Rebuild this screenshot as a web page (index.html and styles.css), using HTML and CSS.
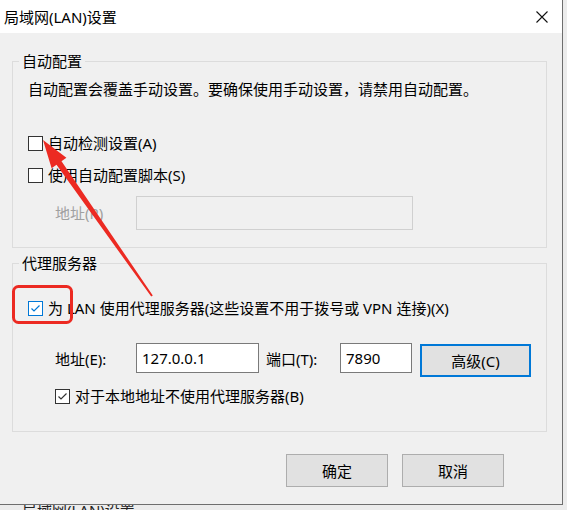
FILE: index.html
```html
<!DOCTYPE html>
<html lang="zh-CN">
<head>
    <meta charset="UTF-8">
    <title>局域网(LAN)设置</title>
    <link rel="stylesheet" href="styles.css">
</head>
<body>

    <div class="window">
        <div class="titlebar">
            <span class="title">局域网(LAN)设置</span>
            <svg class="close" width="12" height="12" viewBox="0 0 12 12">
                <path d="M0.5 0.5 L11.5 11.5 M11.5 0.5 L0.5 11.5" stroke="#111" stroke-width="1.1" fill="none"/>
            </svg>
        </div>

        <div class="content">
            <fieldset class="group group-auto">
                <legend>自动配置</legend>
                <div class="desc">自动配置会覆盖手动设置。要确保使用手动设置，请禁用自动配置。</div>

                <div class="check-row first">
                    <span class="box"></span>
                    <span>自动检测设置(A)</span>
                </div>
                <div class="check-row second">
                    <span class="box"></span>
                    <span>使用自动配置脚本(S)</span>
                </div>
                <div class="field-row script-row">
                    <span class="field-label disabled">地址(R)</span>
                    <span class="input input-disabled"></span>
                </div>
            </fieldset>

            <fieldset class="group group-proxy">
                <legend>代理服务器</legend>
                <div class="check-row proxy-check">
                    <span class="box box-blue">
                        <svg width="13" height="13" viewBox="0 0 13 13"><path d="M2.5 6.5 L5 9 L10.5 3.5" stroke="#0078d7" stroke-width="1.2" fill="none"/></svg>
                    </span>
                    <span>为 LAN 使用代理服务器(这些设置不用于拨号或 VPN 连接)(X)</span>
                </div>
                <div class="field-row proxy-row">
                    <span class="field-label">地址(E):</span>
                    <span class="input input-addr">127.0.0.1</span>
                    <span class="field-label port-label">端口(T):</span>
                    <span class="input input-port">7890</span>
                    <span class="btn btn-focus">高级(C)</span>
                </div>
                <div class="check-row bypass">
                    <span class="box">
                        <svg width="13" height="13" viewBox="0 0 13 13"><path d="M2.5 6.5 L5 9 L10.5 3.5" stroke="#333" stroke-width="1.2" fill="none"/></svg>
                    </span>
                    <span>对于本地地址不使用代理服务器(B)</span>
                </div>
            </fieldset>

            <div class="actions">
                <span class="btn">确定</span>
                <span class="btn">取消</span>
            </div>
        </div>
    </div>

    <div class="behind"><span>局域网(LAN)设置</span></div>

    <!-- red marks drawn on top of the screenshot -->
    <svg class="marks" width="567" height="510" viewBox="0 0 567 510">
        <rect x="13.5" y="286.5" width="58" height="36" rx="5" fill="none" stroke="#ec2a22" stroke-width="3"/>
        <polygon points="43,140 66.4,157.8 61.5,161.3 152.8,295.4 151.2,296.6 56.5,164.7 51.6,168.2" fill="#ec2a22"/>
    </svg>

</body>
</html>
```

FILE: styles.css
```css
body {
    margin: 0;
    width: 567px;
    height: 510px;
    overflow: hidden;
    background: #ececec;
    font-family: "Noto Sans", "Noto Sans CJK SC", sans-serif;
    font-size: 15px;
    color: #000;
    position: relative;
}
.window {
    width: 562px;
    height: 504px;
    border-right: 1px solid #6e6e6e;
    border-bottom: 1px solid #6e6e6e;
    background: #f0f0f0;
    display: flex;
    flex-direction: column;
}
.titlebar {
    height: 33px;
    background: #fff;
    display: flex;
    align-items: center;
    justify-content: space-between;
    padding: 0 14px 0 4px;
}
.title {
    line-height: 20px;
}
.content {
    display: flex;
    flex-direction: column;
}
.group {
    margin: 0 15px 0 12px;
    padding: 0 0 0 0;
    border: 1px solid #dcdcdc;
    min-width: 0;
}
.group legend {
    margin-left: 6px;
    padding: 0 3px;
    line-height: 20px;
}
.group-auto {
    margin-top: 18px;
    padding-bottom: 17px;
}
.group-proxy {
    margin-top: 5px;
    padding-bottom: 25px;
}
.desc {
    margin-top: 8px;
    padding-left: 15px;
    line-height: 20px;
}
.check-row {
    display: flex;
    align-items: center;
    gap: 5px;
    padding-left: 15px;
    line-height: 20px;
    height: 20px;
}
.check-row.first { margin-top: 34px; }
.check-row.second { margin-top: 12px; }
.proxy-check { margin-top: 25px; }
.bypass {
    margin-top: 9px;
    padding-left: 42px;
}
.box {
    width: 13px;
    height: 13px;
    border: 1px solid #333;
    background: #fff;
    display: flex;
}
.box-blue {
    border-color: #0078d7;
}
.field-row {
    display: flex;
    align-items: flex-start;
    padding-left: 42px;
}
.script-row { margin-top: 11px; }
.proxy-row { margin-top: 25px; }
.field-label {
    width: 81px;
    line-height: 20px;
    padding-top: 6px;
}
.field-label.disabled {
    color: #a0a0a0;
    padding-top: 7px;
}
.port-label {
    width: 74px;
    margin-left: 7px;
}
.input {
    box-sizing: border-box;
    height: 30px;
    border: 1px solid #7a7a7a;
    background: #fff;
    padding: 2px 5px 0;
    line-height: 24px;
}
.input-disabled {
    width: 277px;
    height: 34px;
    border-color: #d0d0d0;
    background: #f0f0f0;
}
.input-addr { width: 123px; }
.input-port { width: 72px; }
.btn {
    box-sizing: border-box;
    width: 102px;
    height: 33px;
    border: 1px solid #adadad;
    background: #e1e1e1;
    display: flex;
    align-items: center;
    justify-content: center;
}
.btn-focus {
    width: 111px;
    margin-left: 8px;
    margin-top: 1px;
    border: 2px solid #0078d7;
}
.actions {
    display: flex;
    justify-content: flex-end;
    gap: 14px;
    margin-top: 22px;
    padding-right: 58px;
}
.behind {
    height: 5px;
    overflow: hidden;
    padding-left: 22px;
}
.behind span {
    display: block;
    line-height: 16px;
    margin-top: -3px;
    color: #222;
}
.marks {
    position: absolute;
    left: 0;
    top: 0;
    pointer-events: none;
}
```
